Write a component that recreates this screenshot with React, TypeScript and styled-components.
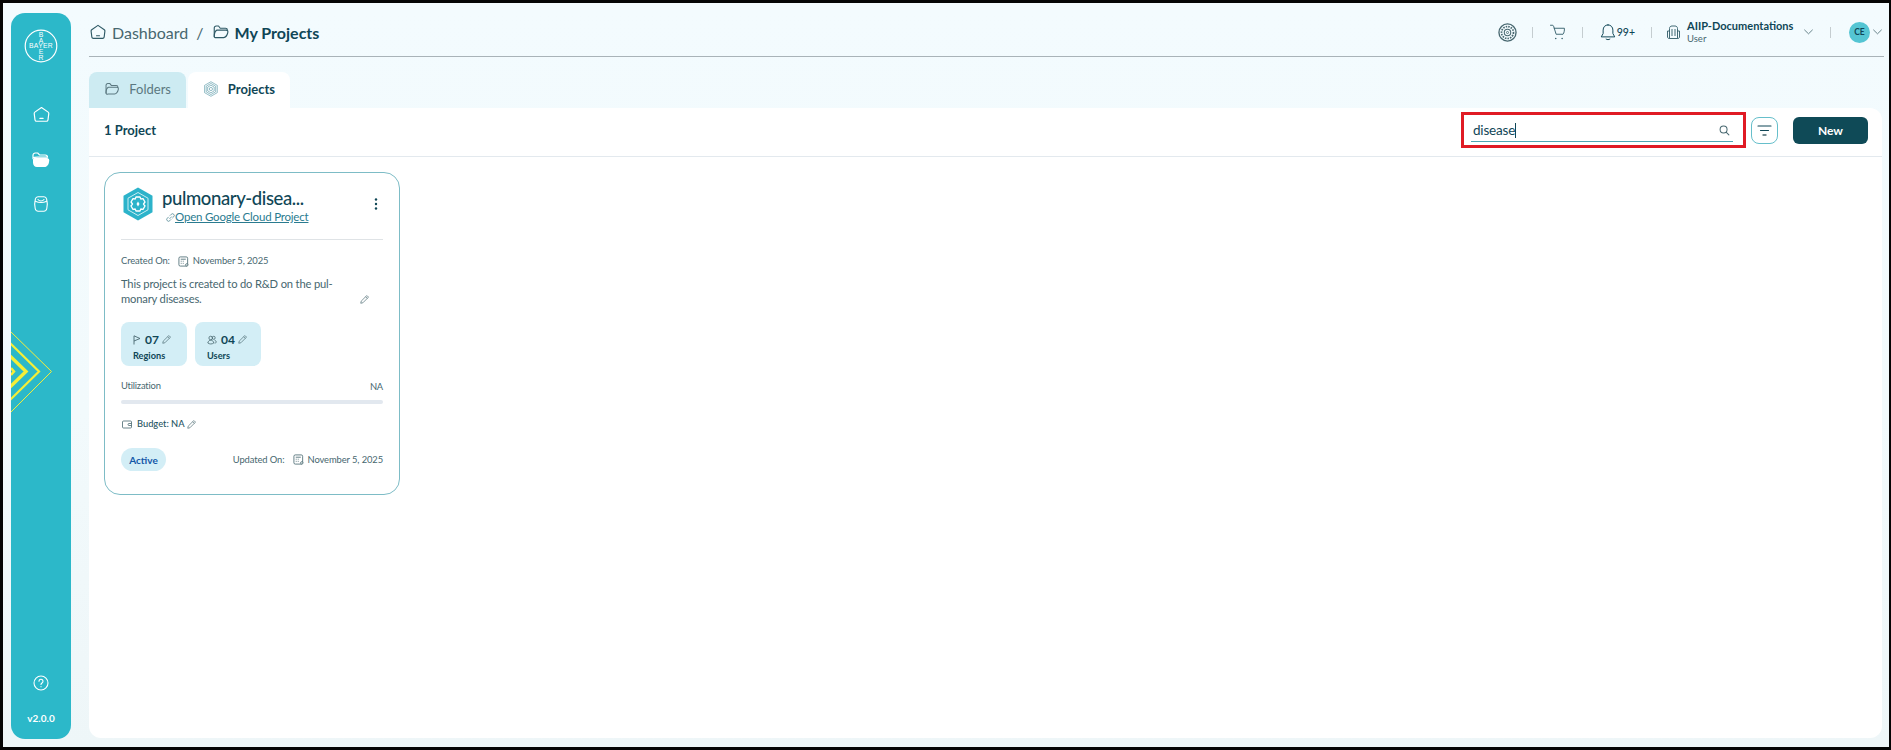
import React from "react";
import styled, { createGlobalStyle } from "styled-components";

const Global = createGlobalStyle`
  html, body { margin: 0; padding: 0; background: #000; }
  #root { width: 1891px; height: 750px; overflow: hidden; }
  * { box-sizing: border-box; }
`;

const Frame = styled.div`
  width: 1891px; height: 750px;
  border: solid #050505; border-width: 3px 2px 3px 3px;
  background: linear-gradient(180deg, #f3fbfe 0%, #f2fafc 55%, #eef6f8 100%);
  display: flex; gap: 18px;
  padding: 10px 7px 8px 8px;
  font-family: Lato, "Noto Sans", sans-serif;
  color: #0f4656;
`;
const Sidebar = styled.aside`
  width: 60px; flex: none; position: relative; overflow: hidden;
  background: #2cb8c9; border-radius: 14px;
  display: flex; flex-direction: column; align-items: center;
  padding-top: 16px; color: #fff;
`;
const NavIcons = styled.nav`
  display: flex; flex-direction: column; align-items: center; gap: 28px; margin-top: 42px;
`;
const Chevrons = styled.svg`
  position: absolute; left: 0; top: 317px;
`;
const SideFoot = styled.div`
  margin-top: auto; display: flex; flex-direction: column; align-items: center; gap: 20px; padding-bottom: 14px;
`;
const Version = styled.span`
  font-size: 10px; font-weight: 700; line-height: 14px;
`;
const Main = styled.main`
  flex: 1; min-width: 0; display: flex; flex-direction: column; margin-bottom: 1px;
`;
const Header = styled.header`
  height: 44px; flex: none; display: flex; align-items: center; justify-content: space-between;
  border-bottom: 1px solid #a9b3b8; padding: 0 2px 5px 0; margin-right: -2px;
`;
const Crumbs = styled.div`
  display: flex; align-items: center; font-size: 16px;
`;
const CrumbLink = styled.span`
  color: #47676f; margin-left: 5px;
`;
const Slash = styled.span`
  color: #47676f; margin: 0 9px 0 8px;
`;
const CrumbCurrent = styled.span`
  font-weight: 700; margin-left: 4px; color: #0f4656;
`;
const TopRight = styled.div`
  display: flex; align-items: center;
`;
const Sep = styled.span<{ $l: number; $r: number }>`
  width: 1px; height: 11px; background: #c5cdd0;
  margin: 0 ${(p) => p.$r}px 0 ${(p) => p.$l}px;
`;
const Badge = styled.span`
  font-size: 10.5px; font-weight: 500;
`;
const Org = styled.div`
  display: flex; flex-direction: column; margin-left: 6px; width: 117px;
`;
const OrgName = styled.span`
  font-size: 11px; font-weight: 700; line-height: 14px; white-space: nowrap;
`;
const OrgRole = styled.span`
  font-size: 9.5px; line-height: 12px; color: #47676f;
`;
const Avatar = styled.span`
  width: 21px; height: 21px; border-radius: 50%; background: #54c5d3;
  display: flex; align-items: center; justify-content: center;
  font-size: 8.5px; font-weight: 700; margin-right: 3px;
`;
const Tabs = styled.div`
  height: 36px; flex: none; margin-top: 15px; display: flex; gap: 2px;
`;
const Tab = styled.div<{ $active?: boolean }>`
  display: flex; align-items: center; gap: 9px;
  padding: 0 15px 2px;
  width: ${(p) => (p.$active ? "102px" : "97px")};
  border-radius: 8px 8px 0 0;
  background: ${(p) => (p.$active ? "#fff" : "#cdebf2")};
  color: ${(p) => (p.$active ? "#0f4656" : "#5b7880")};
  font-size: 13px; font-weight: ${(p) => (p.$active ? 700 : 400)};
`;
const Panel = styled.section`
  flex: 1; background: #fff; border-radius: 0 12px 12px 12px;
  display: flex; flex-direction: column; min-height: 0;
`;
const Toolbar = styled.div`
  height: 49px; flex: none; border-bottom: 1px solid #e3e9ee;
  display: flex; align-items: center; padding: 0 14px 4px 15px;
`;
const Count = styled.span`
  font-size: 13px; font-weight: 700;
`;
const SearchBox = styled.div`
  margin-left: auto; width: 285px; height: 36px;
  border: 3px solid #e01b24;
  padding: 4px 10px 3px 7px;
`;
const SearchField = styled.div`
  height: 100%; border-bottom: 1px solid #4ea5b2;
  display: flex; align-items: center; justify-content: space-between;
  padding: 0 3px 0 2px; font-size: 13.5px; letter-spacing: -0.2px;
`;
const Caret = styled.span`
  display: inline-block; width: 1px; height: 15px; background: #0f4656; vertical-align: -3px;
`;
const FilterBtn = styled.button`
  width: 27px; height: 27px; margin-left: 5px; padding: 0; border-radius: 8px;
  border: 1px solid #66bfcb; background: #fff; color: #0f4656;
  display: flex; align-items: center; justify-content: center;
`;
const NewBtn = styled.button`
  width: 75px; height: 27px; margin-left: 15px; border: 0; border-radius: 6px;
  background: #0f4a57; color: #fff; font: 700 12px Lato, sans-serif;
`;
const Cards = styled.div`
  padding: 15px; display: flex;
`;
const Card = styled.article`
  width: 296px; height: 323px; border: 1px solid #7dbcc6; border-radius: 16px;
  padding: 14px 16px 0 16px; display: flex; flex-direction: column;
`;
const CardHead = styled.div`
  display: flex; gap: 7px; height: 53px; border-bottom: 1px solid #dfe3e6; position: relative;
`;
const TitleCol = styled.div`
  display: flex; flex-direction: column;
`;
const Title = styled.h2`
  margin: 0; font-size: 18.5px; font-weight: 500; line-height: 22px; letter-spacing: -0.4px; white-space: nowrap;
`;
const CloudLink = styled.a`
  display: flex; align-items: center; font-size: 11.5px; letter-spacing: -0.2px; line-height: 16px; margin: 0 0 0 4px; color: #2a7b8f;
  span { text-decoration: underline; white-space: nowrap; }
`;
const Kebab = styled.span`
  position: absolute; right: 5px; top: 10px; display: flex;
`;
const Meta = styled.div`
  display: flex; align-items: center; font-size: 9.4px; letter-spacing: -0.1px; color: #47676f; line-height: 14px;
`;
const CreatedRow = styled(Meta)`
  margin-top: 14px;
`;
const MetaIcon = styled.span`
  display: inline-flex; margin: 0 4px 0 8px;
`;
const Desc = styled.div`
  margin-top: 8px; width: 262px; font-size: 11.2px; letter-spacing: -0.17px; line-height: 15px; color: #47676f; position: relative;
`;
const DescPen = styled.span`
  position: absolute; right: 14px; bottom: 2px; display: flex; color: #47676f;
`;
const Stats = styled.div`
  display: flex; gap: 8px; margin-top: 16px;
`;
const Stat = styled.div`
  width: 66px; height: 44px; border-radius: 8px; background: #d3eef6;
  padding: 10px 0 0 12px; display: flex; flex-direction: column;
`;
const StatTop = styled.div`
  display: flex; align-items: center; height: 15px; gap: 3px;
`;
const StatNum = styled.b`
  font-size: 12px; margin-left: 1px;
`;
const StatLabel = styled.span`
  font-size: 9.2px; font-weight: 700; line-height: 14px; margin-top: 2px;
`;
const UtilRow = styled.div`
  display: flex; justify-content: space-between; margin-top: 13px; font-size: 9.4px; letter-spacing: -0.2px; line-height: 14px; color: #47676f;
`;
const UtilVal = styled.span`
  margin-top: 1px;
`;
const Bar = styled.div`
  height: 4px; border-radius: 2px; background: #e2e8ef; margin-top: 6px;
`;
const BudgetRow = styled.div`
  display: flex; align-items: center; margin-top: 13px; font-size: 9.3px; line-height: 14px; color: #1f5563; font-weight: 500;
  svg:first-child { margin: 0 5px 0 1px; }
  svg:last-child { margin-left: 2px; }
`;
const Foot = styled.div`
  display: flex; align-items: center; justify-content: space-between; margin-top: 17px;
`;
const Pill = styled.span`
  width: 45px; height: 23px; border-radius: 12px; background: #d3eef6; color: #1257a8;
  display: flex; align-items: center; justify-content: center; font-size: 10px; font-weight: 700;
`;

type P = { s?: number; c?: string };
const Base: React.FC<React.PropsWithChildren<{ s: number; vb?: string; sw?: number; c?: string }>> = ({ s, vb = "0 0 24 24", sw = 1.5, c = "currentColor", children }) => (
  <svg width={s} height={s} viewBox={vb} fill="none" stroke={c} strokeWidth={sw} strokeLinecap="round" strokeLinejoin="round">{children}</svg>
);
const HomeI = ({ s = 16, c }: P) => (
  <Base s={s} c={c}><path d="M12 3.200 20.400 9a2 2 0 0 1 .8 1.900l-1 7.900a2 2 0 0 1-2 1.700H5.800a2 2 0 0 1-2-1.700l-1-7.900A2 2 0 0 1 3.600 9Z" /><path d="M10 17h4" /></Base>
);
const FolderI = ({ s = 16, c }: P) => (
  <Base s={s} c={c}><path d="M3 18V6.500A2.500 2.500 0 0 1 5.500 4h3.200l2.300 3h7A2.500 2.500 0 0 1 20.500 9.500" /><path d="M3 18c0-4 1-7.500 3.500-8.500H19c2 0 2.500 1.500 2 3.500-.8 3.500-2.500 6-5.500 6.500H6c-2 .3-3-.3-3-1.500Z" /></Base>
);
const FolderSolid = () => (
  <svg width="18" height="16" viewBox="0 0 18 16"><path d="M1 6V3.200C1 2 2 1 3.200 1h2.600l1.700 2h5.700c1.300 0 2.300 1 2.300 2.200H5.500C3 5.200 1.600 5.300 1 6Z" fill="none" stroke="#fff" strokeWidth="1.200" /><path d="M1 7.500C1 6.500 2 6 3 6h12c1.200 0 2.200 1 2.200 2.200 0 3.500-1.700 6.800-5 6.800H5C2.500 15 1 13 1 10.500Z" fill="#fff" /></svg>
);
const BagI = () => (
  <svg width="16" height="16" viewBox="0 0 16 16" fill="none" stroke="#fff" strokeWidth="1.100" strokeLinecap="round"><path d="M5 .8h6c1.300 0 2.300.9 2.600 2.200.9 3.300.9 6.500.2 9.500-.3 1.600-1.500 2.700-3 2.700H5.200c-1.500 0-2.700-1.100-3-2.700C1.500 9.500 1.500 6.300 2.400 3 2.700 1.700 3.700.8 5 .8Z" /><path d="M5 3.500c1.500 2 4.500 2 6 0" /><path d="M2.300 5.200c3.500 1.600 8 1.600 11.400 0" /></svg>
);
const Gear = ({ s = 20, c = "#47676f" }: P) => (
  <svg width={s} height={s} viewBox="0 0 20 20" fill="none" stroke={c}>
    <circle cx="10" cy="10" r="9" strokeWidth="1.400" />
    <circle cx="10" cy="10" r="6.300" strokeWidth="1.800" strokeDasharray="1.600 1.100" />
    <circle cx="10" cy="10" r="3.400" strokeWidth="1.100" />
    <circle cx="10" cy="10" r="1.100" strokeWidth="0.900" />
  </svg>
);
const HexTab = () => (
  <svg width="18" height="18" viewBox="0 0 20 20" fill="none" stroke="#3f8a99" strokeWidth="0.700">
    <path d="M10 .8 18 5.400v9.200L10 19.200 2 14.600V5.400Z" />
    <path d="M10 3 16 6.500v7L10 17 4 13.500v-7Z" />
    <path d="M10 5.200 14.100 7.600v4.800L10 14.800 5.900 12.400V7.600Z" />
    <circle cx="10" cy="10" r="2" />
  </svg>
);
const Hexagon = () => (
  <svg width="34" height="34" viewBox="0 0 34 34">
    <path d="M17 .5 31.500 8.700v16.600L17 33.500 2.500 25.300V8.700Z" fill="#2cb3ca" />
    <path d="M17 5.500 27 11.200v11.600L17 28.500 7 22.800V11.200Z" fill="none" stroke="#c8edf3" strokeWidth="1" />
    <path d="M15 10h4l.8 2 2.200-.3 2 3.300-1.500 2 1.500 2-2 3.300-2.200-.3-.8 2h-4l-.8-2-2.200.3-2-3.300 1.500-2-1.500-2 2-3.300 2.200.3Z" fill="none" stroke="#fff" strokeWidth="1.300" strokeLinejoin="round" />
    <path d="M17 14.500 18.500 17 17 19.500 15.500 17Z" fill="#fff" />
  </svg>
);
const Pen = ({ s = 9, c = "#47676f" }: P) => (
  <svg width={s} height={s} viewBox="0 0 12 12" fill="none" stroke={c} strokeWidth="0.900" strokeLinejoin="round"><path d="M1 11l.6-2.800L8.500 1.300a1 1 0 0 1 1.400 0l.8.800a1 1 0 0 1 0 1.400L3.800 10.400Z" /><path d="M7.500 2.300 9.700 4.500" /></svg>
);
const Cal = () => (
  <svg width="11" height="11" viewBox="0 0 12 12" fill="none" stroke="#47676f" strokeWidth="0.900"><rect x="1" y="1" width="9.500" height="10" rx="1.500" /><path d="M3 3.500h5.500M3 5.700h1M5.200 5.700h1M3 8h1M5.200 8h1" /><circle cx="9.600" cy="9.700" r="1.300" fill="#fff" /></svg>
);
const Glass = () => (
  <svg width="11" height="11" viewBox="0 0 12 12" fill="none" stroke="#47676f" strokeWidth="1.100" strokeLinecap="round"><circle cx="5" cy="5" r="3.800" /><path d="M8 8l2.800 2.800" /></svg>
);
const Chevron = ({ c = "#47676f" }: P) => (
  <svg width="9" height="6" viewBox="0 0 9 6" fill="none" stroke={c} strokeWidth="0.800" strokeLinecap="round"><path d="M.6 1l3.900 3.800L8.400 1" /></svg>
);

export default function App() {
  return (
    <Frame>
      <Global />
      <Sidebar>
        <svg width="34" height="34" viewBox="0 0 34 34" fill="none">
          <circle cx="17" cy="17" r="15.800" stroke="#fff" strokeWidth="1.200" />
          <g fill="#fff" fontFamily="Liberation Sans, sans-serif" fontSize="6.800" textAnchor="middle">
            <text x="17" y="19.400" letterSpacing="0.300">BAYER</text>
            <text x="17" y="8">B</text><text x="17" y="13.800">A</text>
            <text x="17" y="25.200">E</text><text x="17" y="31">R</text>
          </g>
        </svg>
        <NavIcons>
          <HomeI s={19} c="#fff" />
          <FolderSolid />
          <BagI />
        </NavIcons>
        <Chevrons width="44" height="84" viewBox="0 0 44 84" fill="none" stroke="#f5ee37">
          <path d="M-1 1 40.500 41.500 -1 83" strokeWidth="1" />
          <path d="M-1 13 28 41.500 -1 70" strokeWidth="2.200" />
          <path d="M-1 26 15 41.500 -1 57" strokeWidth="3.400" />
          <path d="M0 38 3 41.500 0 45" strokeWidth="2.500" />
        </Chevrons>
        <SideFoot>
          <svg width="16" height="16" viewBox="0 0 16 16" fill="none" stroke="#fff" strokeWidth="1.100" strokeLinecap="round">
            <circle cx="8" cy="8" r="7" />
            <path d="M6 6.200a2 2 0 1 1 3.200 1.600c-.7.500-1.200.9-1.200 1.700" />
            <path d="M8 11.600v.2" />
          </svg>
          <Version>v2.0.0</Version>
        </SideFoot>
      </Sidebar>
      <Main>
        <Header>
          <Crumbs>
            <HomeI s={18} c="#2f5a66" />
            <CrumbLink>Dashboard</CrumbLink>
            <Slash>/</Slash>
            <FolderI s={18} c="#2f5a66" />
            <CrumbCurrent>My Projects</CrumbCurrent>
          </Crumbs>
          <TopRight>
            <Gear s={19} />
            <Sep $l={15} $r={16} />
            <Base s={18} c="#2f5a66" sw={1.200}>
              <path d="M2 3h2.500c.8 0 1.300.4 1.600 1.200L9.500 15h9.200c1.400-1.500 2-5 1.800-8H7" />
              <path d="M9 20.500v.1M17.500 20.500v.1" strokeWidth={2} />
            </Base>
            <Sep $l={15} $r={16} />
            <Base s={18} c="#0f4656" sw={1.300}>
              <path d="M12 2.500c-4 0-6.500 3-6.500 7v4.500L3 18.500h18L18.500 14V9.500c0-4-2.500-7-6.500-7Z" />
              <path d="M9.500 21.500c1.500 1 3.500 1 5 0" />
            </Base>
            <Badge>99+</Badge>
            <Sep $l={16} $r={14} />
            <svg width="15" height="15" viewBox="0 0 15 15" fill="none" stroke="#2f5a66" strokeWidth="0.900">
              <path d="M3.500 13.500V3.500C3.500 2 4.500 1 6 1h3c1.500 0 2.500 1 2.500 2.500v10Z" />
              <path d="M3.500 6H1.500v6c0 1 .8 1.500 2 1.500M11.500 6h2v6c0 1-.8 1.500-2 1.500M6 4v7M9 4v7" />
            </svg>
            <Org>
              <OrgName>AIIP-Documentations</OrgName>
              <OrgRole>User</OrgRole>
            </Org>
            <Chevron />
            <Sep $l={17} $r={18} />
            <Avatar>CE</Avatar>
            <Chevron />
          </TopRight>
        </Header>
        <Tabs>
          <Tab><FolderI s={18} c="#5b7880" />Folders</Tab>
          <Tab $active><HexTab />Projects</Tab>
        </Tabs>
        <Panel>
          <Toolbar>
            <Count>1 Project</Count>
            <SearchBox>
              <SearchField>
                <span>disease<Caret /></span>
                <Glass />
              </SearchField>
            </SearchBox>
            <FilterBtn>
              <svg width="15" height="11" viewBox="0 0 15 11" fill="none" stroke="#0f4656" strokeLinecap="round"><path d="M1 1h13" strokeWidth="1.100" /><path d="M3.500 5.500h8" strokeWidth="1.100" /><path d="M6 10h3" strokeWidth="1.400" stroke="#47676f" /></svg>
            </FilterBtn>
            <NewBtn>New</NewBtn>
          </Toolbar>
          <Cards>
            <Card>
              <CardHead>
                <Hexagon />
                <TitleCol>
                  <Title>pulmonary-disea...</Title>
                  <CloudLink>
                    <svg width="9" height="9" viewBox="0 0 12 12" fill="none" stroke="#47818e" strokeWidth="1" strokeLinecap="round"><path d="M5 7.500 7.500 5M5.500 3.200 7 1.700a2.300 2.300 0 0 1 3.300 3.300L8.800 6.500M6.500 8.800 5 10.300A2.300 2.300 0 0 1 1.700 7L3.200 5.500" /></svg>
                    <span>Open Google Cloud Project</span>
                  </CloudLink>
                </TitleCol>
                <Kebab>
                  <svg width="4" height="14" viewBox="0 0 4 14" fill="#0f4656"><circle cx="2" cy="2.500" r="1.200" /><circle cx="2" cy="7" r="1.200" /><circle cx="2" cy="11.500" r="1.200" /></svg>
                </Kebab>
              </CardHead>
              <CreatedRow>
                Created On:
                <MetaIcon><Cal /></MetaIcon>
                November 5, 2025
              </CreatedRow>
              <Desc>
                This project is created to do R&amp;D on the pul-<br />monary diseases.
                <DescPen><Pen /></DescPen>
              </Desc>
              <Stats>
                <Stat>
                  <StatTop>
                    <svg width="8" height="10" viewBox="0 0 8 10" fill="none" stroke="#47676f" strokeWidth="0.900" strokeLinejoin="round"><path d="M1 9.500V.8L7 3.500 1 6" /></svg>
                    <StatNum>07</StatNum>
                    <Pen />
                  </StatTop>
                  <StatLabel>Regions</StatLabel>
                </Stat>
                <Stat>
                  <StatTop>
                    <svg width="10" height="10" viewBox="0 0 10 10" fill="none" stroke="#47676f" strokeWidth="0.800"><circle cx="3.700" cy="3" r="1.800" /><circle cx="6.700" cy="2.800" r="1.500" /><path d="M.8 8c.5-2 1.500-2.800 3-2.800S6.300 6 6.800 8c-2 1.300-4 1.300-6 0ZM7.500 5c1 .3 1.500 1 1.800 2.300-.5.500-1 .7-1.700.8" /></svg>
                    <StatNum>04</StatNum>
                    <Pen />
                  </StatTop>
                  <StatLabel>Users</StatLabel>
                </Stat>
              </Stats>
              <UtilRow>
                <span>Utilization</span>
                <UtilVal>NA</UtilVal>
              </UtilRow>
              <Bar />
              <BudgetRow>
                <svg width="10" height="9" viewBox="0 0 10 9" fill="none" stroke="#47676f" strokeWidth="0.800"><rect x=".5" y="1" width="9" height="7" rx="1" /><path d="M9.500 3.500H7a1 1 0 0 0 0 2h2.500" /></svg>
                Budget: NA
                <Pen />
              </BudgetRow>
              <Foot>
                <Pill>Active</Pill>
                <Meta>
                  Updated On:
                  <MetaIcon><Cal /></MetaIcon>
                  November 5, 2025
                </Meta>
              </Foot>
            </Card>
          </Cards>
        </Panel>
      </Main>
    </Frame>
  );
}
